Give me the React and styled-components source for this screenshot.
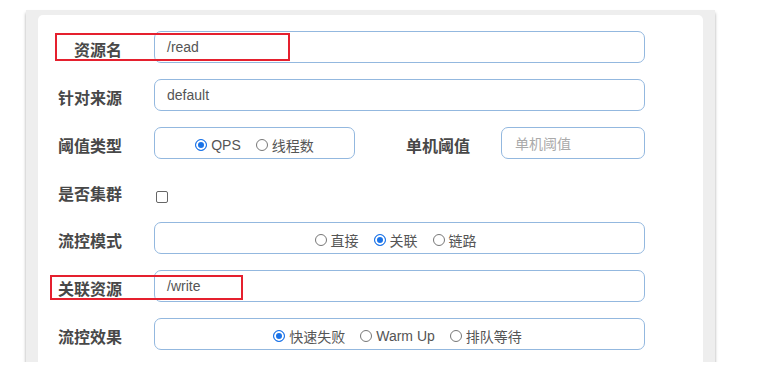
import React from "react";
import styled, { createGlobalStyle } from "styled-components";

const Global = createGlobalStyle`
  html, body { margin: 0; padding: 0; background: #ffffff; }
  body { font-family: "Liberation Sans", "Noto Sans CJK SC", sans-serif; }
`;

const Page = styled.div`
  padding: 10px 0 0 26px;
`;

const Frame = styled.div`
  width: 689px;
  height: 352px;
  box-sizing: border-box;
  background: #eeeeee;
  padding: 5px 12px 0 12px;
  box-shadow: 0 3px 3px rgba(0, 0, 0, 0.35);
`;

const Panel = styled.div`
  height: 100%;
  box-sizing: border-box;
  background: #ffffff;
  border-radius: 5px 5px 0 0;
  padding: 16px 58px 0 0;
  display: flex;
  flex-direction: column;
  gap: 16px;
`;

const Row = styled.div`
  position: relative;
  display: grid;
  grid-template-columns: 84px 491px;
  column-gap: 32px;
  align-items: center;
  height: ${(p) => p.$h || 32}px;
`;

const Label = styled.div`
  text-align: right;
  font-family: "Noto Sans CJK SC", sans-serif;
  font-weight: 700;
  font-size: 16px;
  color: #484848;
  padding-top: 4px;
  white-space: nowrap;
`;

const Input = styled.div`
  box-sizing: border-box;
  height: 32px;
  width: ${(p) => (p.$w ? `${p.$w}px` : "100%")};
  border: 1px solid #93b8df;
  border-radius: 7px;
  padding-left: ${(p) => p.$pl || 12}px;
  display: flex;
  align-items: center;
  font-family: "Liberation Sans", "Noto Sans CJK SC", sans-serif;
  font-size: 14px;
  color: ${(p) => (p.$placeholder ? "#aaaaaa" : "#555555")};
`;

const RadioBox = styled.div`
  box-sizing: border-box;
  height: 32px;
  width: ${(p) => (p.$w ? `${p.$w}px` : "100%")};
  border: 1px solid #93b8df;
  border-radius: 7px;
  display: flex;
  align-items: center;
  justify-content: center;
  gap: 15px;
  padding-top: 4px;
  padding-right: ${(p) => p.$shift || 0}px;
`;

const Option = styled.span`
  display: inline-flex;
  align-items: center;
  gap: 4px;
  font-family: "Liberation Sans", "Noto Sans CJK SC", sans-serif;
  font-size: 14px;
  color: #555;
`;

const Circle = styled.span`
  box-sizing: border-box;
  width: 12px;
  height: 12px;
  border-radius: 50%;
  border: 1px solid ${(p) => (p.$on ? "#1a73e8" : "#777")};
  background: ${(p) => (p.$on ? "#1a73e8" : "#fff")};
  box-shadow: ${(p) => (p.$on ? "inset 0 0 0 2px #ffffff" : "none")};
  margin-top: -1px;
`;

const Split = styled.div`
  display: flex;
  align-items: center;
`;

const SubLabel = styled(Label)`
  flex: 1;
  padding-right: 31px;
`;

const Check = styled.span`
  box-sizing: border-box;
  display: block;
  width: 12px;
  height: 12px;
  border: 1px solid #666;
  border-radius: 2px;
  margin-left: 2px;
  margin-top: 13px;
`;

const Mark = styled.div`
  position: absolute;
  top: ${(p) => p.$top}px;
  left: ${(p) => p.$left}px;
  width: ${(p) => p.$w}px;
  height: ${(p) => p.$h}px;
  border: 2px solid #e5202e;
  box-sizing: border-box;
  pointer-events: none;
`;

function Radio({ on, children }) {
  return (
    <Option>
      <Circle $on={on} />
      {children}
    </Option>
  );
}

export default function App() {
  return (
    <>
      <Global />
      <Page>
        <Frame>
          <Panel>
            <Row>
              <Label>资源名</Label>
              <Input>/read</Input>
              <Mark $top={2} $left={17} $w={235} $h={28} />
            </Row>
            <Row>
              <Label>针对来源</Label>
              <Input>default</Input>
            </Row>
            <Row>
              <Label>阈值类型</Label>
              <Split>
                <RadioBox $w={201}>
                  <Radio on>QPS</Radio>
                  <Radio>线程数</Radio>
                </RadioBox>
                <SubLabel>单机阈值</SubLabel>
                <Input $w={144} $pl={13} $placeholder>单机阈值</Input>
              </Split>
            </Row>
            <Row $h={31}>
              <Label>是否集群</Label>
              <Check />
            </Row>
            <Row>
              <Label>流控模式</Label>
              <RadioBox $shift={8}>
                <Radio>直接</Radio>
                <Radio on>关联</Radio>
                <Radio>链路</Radio>
              </RadioBox>
            </Row>
            <Row>
              <Label>关联资源</Label>
              <Input>/write</Input>
              <Mark $top={5} $left={12} $w={193} $h={25} />
            </Row>
            <Row>
              <Label>流控效果</Label>
              <RadioBox $shift={4}>
                <Radio on>快速失败</Radio>
                <Radio>Warm Up</Radio>
                <Radio>排队等待</Radio>
              </RadioBox>
            </Row>
          </Panel>
        </Frame>
      </Page>
    </>
  );
}
